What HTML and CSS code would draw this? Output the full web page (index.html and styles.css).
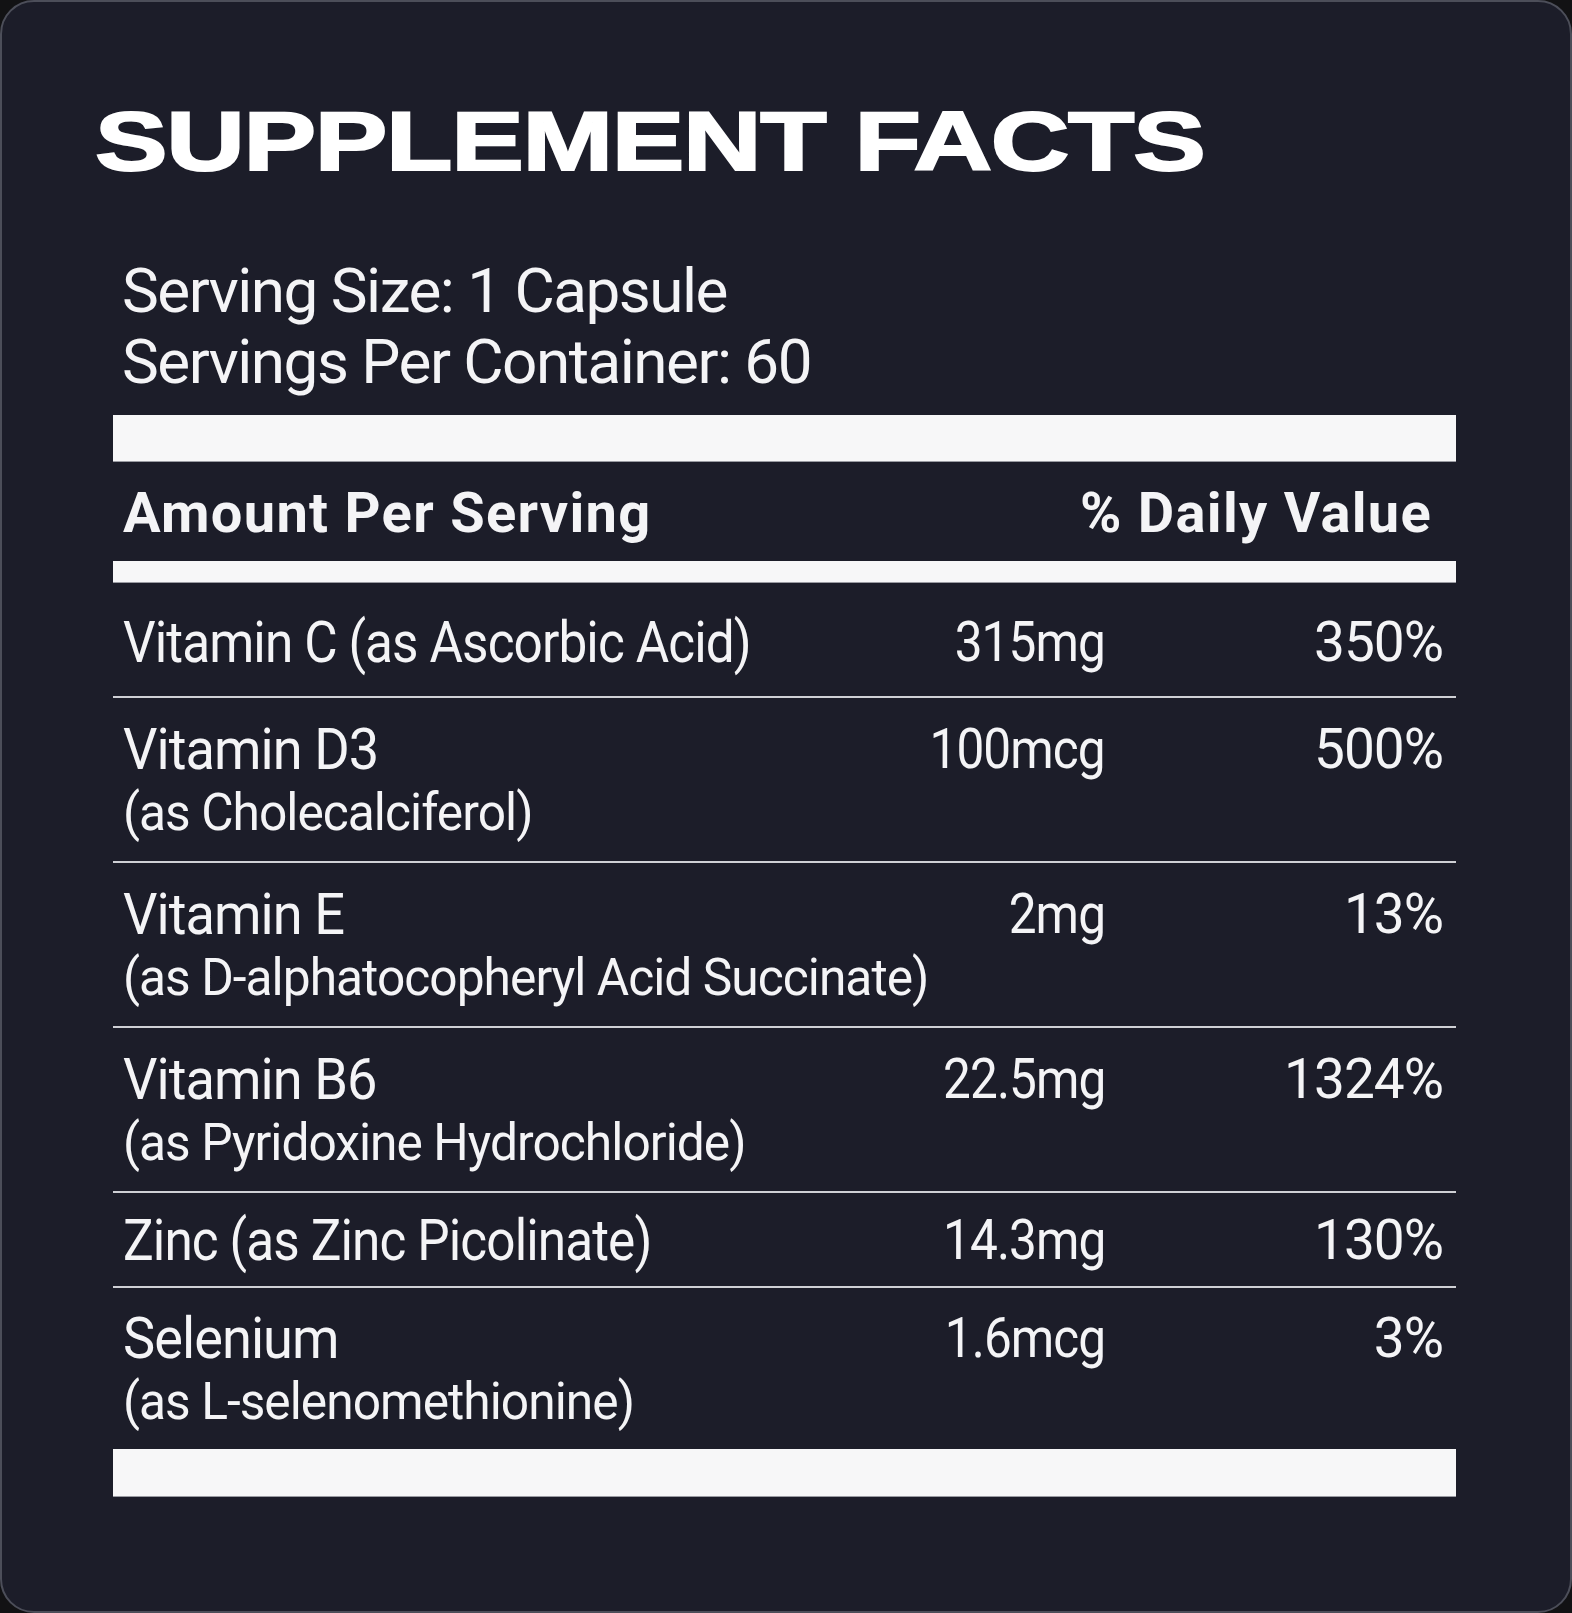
FILE: index.html
```html
<!DOCTYPE html>
<html lang="en">
<head>
<meta charset="utf-8">
<title>Supplement Facts</title>
<link rel="stylesheet" href="styles.css">
</head>
<body>
<div class="card">
  <h1 class="title"><span class="title-text">SUPPLEMENT FACTS</span></h1>
  <div class="serving">
    <div class="serving-line">Serving Size: 1 Capsule</div>
    <div class="serving-line">Servings Per Container: 60</div>
  </div>
  <div class="facts">
    <div class="bar bar-thick"></div>
    <div class="head">
      <span class="head-left">Amount Per Serving</span>
      <span class="head-right">% Daily Value</span>
    </div>
    <div class="bar bar-mid"></div>

    <div class="row row-first">
      <div class="name"><div class="line line-main"><span class="txt txt-single">Vitamin C (as Ascorbic Acid)</span></div></div>
      <div class="amt"><span class="num">315mg</span></div>
      <div class="pct">350%</div>
    </div>
    <div class="row row-double">
      <div class="name"><div class="line line-main"><span class="txt">Vitamin D3</span></div><div class="line line-sub"><span class="txt">(as Cholecalciferol)</span></div></div>
      <div class="amt"><span class="num">100mcg</span></div>
      <div class="pct">500%</div>
    </div>
    <div class="row row-double">
      <div class="name"><div class="line line-main"><span class="txt">Vitamin E</span></div><div class="line line-sub"><span class="txt">(as D-alphatocopheryl Acid Succinate)</span></div></div>
      <div class="amt"><span class="num">2mg</span></div>
      <div class="pct">13%</div>
    </div>
    <div class="row row-double">
      <div class="name"><div class="line line-main"><span class="txt">Vitamin B6</span></div><div class="line line-sub"><span class="txt">(as Pyridoxine Hydrochloride)</span></div></div>
      <div class="amt"><span class="num">22.5mg</span></div>
      <div class="pct">1324%</div>
    </div>
    <div class="row row-single">
      <div class="name"><div class="line line-main"><span class="txt txt-single">Zinc (as Zinc Picolinate)</span></div></div>
      <div class="amt"><span class="num">14.3mg</span></div>
      <div class="pct">130%</div>
    </div>
    <div class="row row-last">
      <div class="name"><div class="line line-main"><span class="txt">Selenium</span></div><div class="line line-sub"><span class="txt">(as L-selenomethionine)</span></div></div>
      <div class="amt"><span class="num">1.6mcg</span></div>
      <div class="pct">3%</div>
    </div>

    <div class="bar bar-thick bar-bottom"></div>
  </div>
</div>
</body>
</html>
```

FILE: styles.css
```css
* { box-sizing: border-box; }

html, body {
  margin: 0;
  padding: 0;
  background: #121214;
}

body {
  font-family: Roboto, "Liberation Sans", Arial, sans-serif;
  color: #f4f4f6;
}

.card {
  width: 1572px;
  height: 1613px;
  background: #1c1d29;
  border: 2px solid #4c4e59;
  border-radius: 34px;
  overflow: hidden;
}

.title {
  margin: 97px 0 0 93px;
  font-family: "Liberation Sans", Arial, sans-serif;
  font-weight: 700;
  font-size: 84px;
  line-height: 84px;
  height: 84px;
  white-space: nowrap;
  color: #ffffff;
}

.title-text {
  display: inline-block;
  transform: scaleX(1.295);
  transform-origin: left center;
  -webkit-text-stroke: 2px #ffffff;
  letter-spacing: -1px;
}

.serving {
  margin: 72px 0 0 120px;
  font-size: 62px;
  line-height: 71px;
  letter-spacing: -1.5px;
}

.serving-line { white-space: nowrap; }

.facts {
  margin: 18px 114px 0 111px;
  display: flex;
  flex-direction: column;
}

.bar {
  background: #f7f7f8;
  box-shadow: 0 1px 0 #9a9ba2;
}

.bar-thick { height: 46px; }
.bar-mid { height: 21px; }
.bar-bottom { height: 47px; }

.head {
  display: flex;
  justify-content: space-between;
  padding: 20px 24px 16px 10px;
  font-weight: 700;
  font-size: 56px;
  line-height: 64px;
  letter-spacing: 1.3px;
}

.row {
  display: flex;
  align-items: flex-start;
  padding: 20px 13px 17px 10px;
  font-size: 55px;
  line-height: 63px;
  letter-spacing: -1px;
  border-bottom: 2px solid #cfd0d5;
}

.row-first { padding-top: 29px; padding-bottom: 22px; }
.row-single { padding-top: 16px; padding-bottom: 14px; }
.row-last { border-bottom: none; padding-top: 19px; padding-bottom: 16px; }

.name {
  flex: 1;
  min-width: 0;
}

.line { white-space: nowrap; }
.line-main { font-size: 57px; }
.line-sub { font-size: 52px; }

.txt {
  display: inline-block;
  transform: scaleX(0.95);
  transform-origin: left center;
}

.line-sub .txt { transform: scaleX(0.955); }
.txt.txt-single { transform: scaleX(0.9); }

.amt {
  width: 223px;
  text-align: right;
  white-space: nowrap;
}

.num {
  display: inline-block;
  transform: scaleX(0.9);
  transform-origin: right center;
}

.pct {
  width: 338px;
  text-align: right;
  white-space: nowrap;
}
```
